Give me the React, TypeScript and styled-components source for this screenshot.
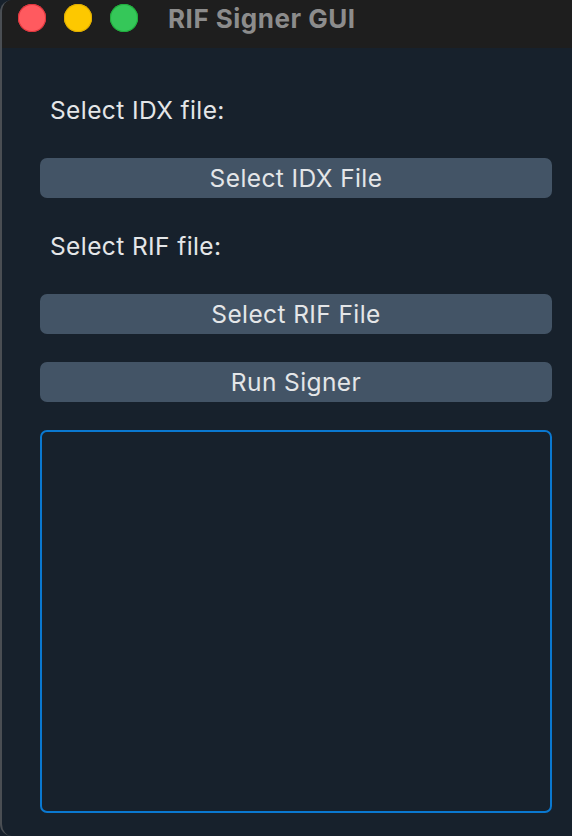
import React from "react";
import styled, { createGlobalStyle } from "styled-components";

const GlobalStyle = createGlobalStyle`
  html, body {
    margin: 0;
    padding: 0;
    background: #17212c;
    width: 572px;
    height: 836px;
    overflow: hidden;
  }
  * { box-sizing: border-box; }
`;

const Window = styled.div`
  width: 572px;
  height: 836px;
  display: flex;
  flex-direction: column;
  background: #17212c;
  border-left: 2px solid #4a4e53;
  border-top-left-radius: 12px;
  border-bottom-left-radius: 12px;
  overflow: hidden;
  font-family: Inter, "Liberation Sans", sans-serif;
`;

const TitleBar = styled.div`
  height: 48px;
  flex: 0 0 48px;
  background: #1e1e1e;
  display: flex;
  align-items: center;
  padding-left: 16px;
`;

const Lights = styled.div`
  display: flex;
  gap: 18px;
  margin-top: -12px;
`;

const Light = styled.span<{ $fill: string; $edge: string }>`
  width: 28px;
  height: 28px;
  border-radius: 50%;
  background: ${(p) => p.$fill};
  box-shadow: inset 0 0 0 1px ${(p) => p.$edge};
`;

const Title = styled.div`
  margin-left: 30px;
  margin-top: -12px;
  font-size: 26px;
  font-weight: 700;
  color: #8c8c8c;
  letter-spacing: 0.5px;
`;

const Content = styled.div`
  flex: 1;
  display: flex;
  flex-direction: column;
  gap: 28px;
  padding: 42px 20px 23px 38px;
`;

const Label = styled.div`
  height: 40px;
  line-height: 40px;
  padding-left: 10px;
  font-size: 24.5px;
  letter-spacing: 0.4px;
  color: #e4e6e8;
`;

const Button = styled.button`
  height: 40px;
  width: 100%;
  border: none;
  border-radius: 7px;
  background: #435466;
  color: #e4e6e8;
  font-family: inherit;
  font-size: 24.5px;
  letter-spacing: 0.4px;
  padding: 0;
  cursor: pointer;
`;

const Output = styled.textarea`
  flex: 1;
  width: 100%;
  resize: none;
  background: #17212c;
  border: 2px solid #0a78d0;
  border-radius: 7px;
  outline: none;
  color: #e4e6e8;
  font-family: inherit;
  font-size: 16px;
`;

export default function App() {
  return (
    <>
      <GlobalStyle />
      <Window>
        <TitleBar>
          <Lights>
            <Light $fill="#ff5a5f" $edge="#e0343c" />
            <Light $fill="#fdc800" $edge="#e0ad00" />
            <Light $fill="#35c759" $edge="#1fae3c" />
          </Lights>
          <Title>RIF Signer GUI</Title>
        </TitleBar>
        <Content>
          <Label>Select IDX file:</Label>
          <Button>Select IDX File</Button>
          <Label>Select RIF file:</Label>
          <Button>Select RIF File</Button>
          <Button>Run Signer</Button>
          <Output readOnly />
        </Content>
      </Window>
    </>
  );
}
